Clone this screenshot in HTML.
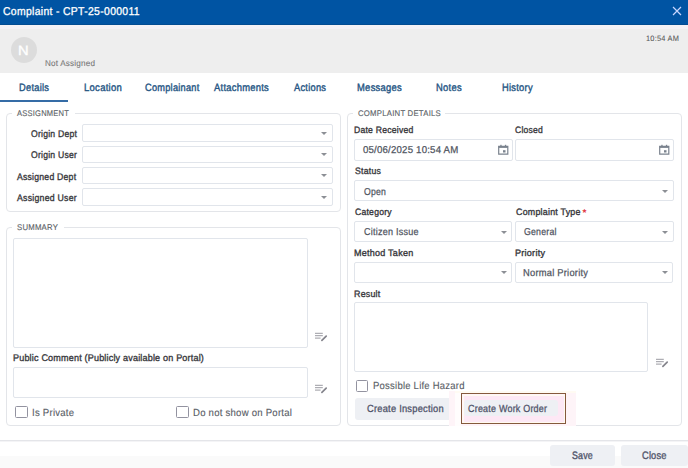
<!DOCTYPE html>
<html><head><meta charset="utf-8">
<style>
*{box-sizing:border-box;margin:0;padding:0}
html,body{width:688px;height:468px;overflow:hidden;background:#fff;font-family:"Liberation Sans",sans-serif;color:#333;text-rendering:geometricPrecision}
.abs{position:absolute}
.t{position:absolute;line-height:1;white-space:nowrap}
.tab{color:#265684}
.leg{color:#5b5f66}
.lbl{color:#38383c}
.val{color:#50555f}
.fs{border:1px solid #e3e5e9;border-radius:4px}
.inp{border:1px solid #e1e5eb;border-radius:2px;background:#fff}
.legbg{background:#fff}
.cb{border:1.5px solid #9393a0;border-radius:1.5px}
.cbl{color:#595d66}
.btn{background:#eef0f4;border-radius:3px}
.btxt{color:#50546a}
</style></head><body>
<div class="abs " style="left:0px;top:0px;width:688px;height:25px;background:#0054a3"></div>
<div class="t " style="top:6.93px;font-size:11.3px;font-weight:normal;letter-spacing:0.35px;-webkit-text-stroke:0.3px currentColor;left:2.90px;transform-origin:0 0;transform:scaleX(0.9216);color:#fff;">Complaint - CPT-25-000011</div>
<svg class="abs" style="left:672px;top:5.5px" width="10" height="10" viewBox="0 0 10 10"><path d="M1 1L9 9M9 1L1 9" stroke="#c8d6ff" stroke-width="1.2"/></svg>
<div class="abs " style="left:0px;top:25px;width:688px;height:47.5px;background:#eeeeee"></div>
<div class="abs " style="left:0px;top:25px;width:688px;height:4px;background:#f3f1f6"></div>
<div class="abs " style="left:0px;top:24px;width:688px;height:1px;background:#024c92"></div>
<div class="abs " style="left:10.5px;top:36.8px;width:26.5px;height:26.5px;border-radius:50%;background:#dcdcdc"></div>
<div class="t " style="top:43.87px;font-size:13.5px;font-weight:normal;letter-spacing:0px;-webkit-text-stroke:0.3px currentColor;left:17.86px;transform-origin:0 0;transform:scaleX(1.0875);color:#fff;">N</div>
<div class="t " style="top:59.19px;font-size:8.4px;font-weight:normal;letter-spacing:0.2px;-webkit-text-stroke:0.1px currentColor;left:44.80px;transform-origin:0 0;transform:scaleX(0.9692);color:#787878;">Not Assigned</div>
<div class="t " style="top:35.10px;font-size:7.8px;font-weight:normal;letter-spacing:0.25px;-webkit-text-stroke:0.05px currentColor;left:645.75px;transform-origin:0 0;transform:scaleX(0.9500);color:#555555;">10:54 AM</div>
<div class="t tab" style="top:83.33px;font-size:10.6px;font-weight:normal;letter-spacing:0.3px;-webkit-text-stroke:0.4px currentColor;left:18.62px;transform-origin:0 0;transform:scaleX(0.8758);">Details</div>
<div class="t tab" style="top:83.33px;font-size:10.6px;font-weight:normal;letter-spacing:0.3px;-webkit-text-stroke:0.4px currentColor;left:83.80px;transform-origin:0 0;transform:scaleX(0.8976);">Location</div>
<div class="t tab" style="top:83.33px;font-size:10.6px;font-weight:normal;letter-spacing:0.3px;-webkit-text-stroke:0.4px currentColor;left:144.70px;transform-origin:0 0;transform:scaleX(0.8683);">Complainant</div>
<div class="t tab" style="top:83.33px;font-size:10.6px;font-weight:normal;letter-spacing:0.3px;-webkit-text-stroke:0.4px currentColor;left:213.90px;transform-origin:0 0;transform:scaleX(0.8855);">Attachments</div>
<div class="t tab" style="top:83.33px;font-size:10.6px;font-weight:normal;letter-spacing:0.3px;-webkit-text-stroke:0.4px currentColor;left:294.40px;transform-origin:0 0;transform:scaleX(0.8757);">Actions</div>
<div class="t tab" style="top:83.33px;font-size:10.6px;font-weight:normal;letter-spacing:0.3px;-webkit-text-stroke:0.4px currentColor;left:357.01px;transform-origin:0 0;transform:scaleX(0.8898);">Messages</div>
<div class="t tab" style="top:83.33px;font-size:10.6px;font-weight:normal;letter-spacing:0.3px;-webkit-text-stroke:0.4px currentColor;left:435.61px;transform-origin:0 0;transform:scaleX(0.8857);">Notes</div>
<div class="t tab" style="top:83.33px;font-size:10.6px;font-weight:normal;letter-spacing:0.3px;-webkit-text-stroke:0.4px currentColor;left:502.12px;transform-origin:0 0;transform:scaleX(0.8794);">History</div>
<div class="abs " style="left:0px;top:100px;width:68px;height:2px;background:#356ca6"></div>
<div class="abs fs" style="left:6px;top:113px;width:335px;height:99px;"></div>
<div class="abs legbg" style="left:12px;top:108px;width:63px;height:10px;"></div>
<div class="t leg" style="top:110.36px;font-size:8.2px;font-weight:normal;letter-spacing:0.25px;-webkit-text-stroke:0.12px currentColor;left:17.40px;transform-origin:0 0;transform:scaleX(0.9193);">ASSIGNMENT</div>
<div class="t lbl" style="top:129.97px;font-size:9.6px;font-weight:normal;letter-spacing:0.25px;-webkit-text-stroke:0.35px currentColor;left:30.50px;transform-origin:0 0;transform:scaleX(0.8980);">Origin Dept</div>
<div class="abs inp" style="left:82px;top:124px;width:251px;height:17.5px;"></div>
<svg class="abs" style="left:320.5px;top:131.8px" width="6" height="3" viewBox="0 0 6 3"><path d="M0 0H6L3 3Z" fill="#8c8f95"/></svg>
<div class="t lbl" style="top:150.87px;font-size:9.6px;font-weight:normal;letter-spacing:0.25px;-webkit-text-stroke:0.35px currentColor;left:30.50px;transform-origin:0 0;transform:scaleX(0.8980);">Origin User</div>
<div class="abs inp" style="left:82px;top:145.5px;width:251px;height:17.5px;"></div>
<svg class="abs" style="left:320.5px;top:153.3px" width="6" height="3" viewBox="0 0 6 3"><path d="M0 0H6L3 3Z" fill="#8c8f95"/></svg>
<div class="t lbl" style="top:172.87px;font-size:9.6px;font-weight:normal;letter-spacing:0.25px;-webkit-text-stroke:0.35px currentColor;left:16.70px;transform-origin:0 0;transform:scaleX(0.9030);">Assigned Dept</div>
<div class="abs inp" style="left:82px;top:166.5px;width:251px;height:17.5px;"></div>
<svg class="abs" style="left:320.5px;top:174.3px" width="6" height="3" viewBox="0 0 6 3"><path d="M0 0H6L3 3Z" fill="#8c8f95"/></svg>
<div class="t lbl" style="top:193.97px;font-size:9.6px;font-weight:normal;letter-spacing:0.25px;-webkit-text-stroke:0.35px currentColor;left:17.00px;transform-origin:0 0;transform:scaleX(0.9123);">Assigned User</div>
<div class="abs inp" style="left:82px;top:188px;width:251px;height:17.5px;"></div>
<svg class="abs" style="left:320.5px;top:195.8px" width="6" height="3" viewBox="0 0 6 3"><path d="M0 0H6L3 3Z" fill="#8c8f95"/></svg>
<div class="abs fs" style="left:6px;top:227px;width:335px;height:199px;"></div>
<div class="abs legbg" style="left:12px;top:221px;width:52px;height:10px;"></div>
<div class="t leg" style="top:224.46px;font-size:8.2px;font-weight:normal;letter-spacing:0.25px;-webkit-text-stroke:0.12px currentColor;left:17.40px;transform-origin:0 0;transform:scaleX(0.9465);">SUMMARY</div>
<div class="abs inp" style="left:13px;top:238px;width:294.5px;height:109.5px;"></div>
<svg class="abs" style="left:315px;top:332px" width="13" height="10" viewBox="0 0 13 10"><path d="M0 1.3H7.8M0 3.7H7.8M0 6.1H5.6" stroke="#9a9aa2" stroke-width="1"/><path d="M6.9 8.4L11.2 4.1" stroke="#84848c" stroke-width="1.7" stroke-linecap="round"/></svg>
<div class="t lbl" style="top:354.17px;font-size:9.6px;font-weight:normal;letter-spacing:0.2px;-webkit-text-stroke:0.35px currentColor;left:12.66px;transform-origin:0 0;transform:scaleX(0.9406);">Public Comment (Publicly available on Portal)</div>
<div class="abs inp" style="left:13px;top:366.8px;width:294.5px;height:31.5px;"></div>
<svg class="abs" style="left:315px;top:384px" width="13" height="10" viewBox="0 0 13 10"><path d="M0 1.3H7.8M0 3.7H7.8M0 6.1H5.6" stroke="#9a9aa2" stroke-width="1"/><path d="M6.9 8.4L11.2 4.1" stroke="#84848c" stroke-width="1.7" stroke-linecap="round"/></svg>
<div class="abs cb" style="left:15.3px;top:406.3px;width:12.3px;height:12px;"></div>
<div class="t cbl" style="top:408.78px;font-size:10.3px;font-weight:normal;letter-spacing:0.25px;-webkit-text-stroke:0.12px currentColor;left:32.07px;transform-origin:0 0;transform:scaleX(0.9318);">Is Private</div>
<div class="abs cb" style="left:176.4px;top:406px;width:12.3px;height:12px;"></div>
<div class="t cbl" style="top:408.78px;font-size:10.3px;font-weight:normal;letter-spacing:0.25px;-webkit-text-stroke:0.12px currentColor;left:193.47px;transform-origin:0 0;transform:scaleX(0.9305);">Do not show on Portal</div>
<div class="abs fs" style="left:347px;top:113px;width:335px;height:312.5px;"></div>
<div class="abs legbg" style="left:353px;top:108px;width:92px;height:10px;"></div>
<div class="t leg" style="top:110.36px;font-size:8.2px;font-weight:normal;letter-spacing:0.25px;-webkit-text-stroke:0.12px currentColor;left:358.40px;transform-origin:0 0;transform:scaleX(0.9471);">COMPLAINT DETAILS</div>
<div class="t lbl" style="top:125.63px;font-size:9.3px;font-weight:normal;letter-spacing:0.25px;-webkit-text-stroke:0.35px currentColor;left:353.87px;transform-origin:0 0;transform:scaleX(0.9270);">Date Received</div>
<div class="t lbl" style="top:125.63px;font-size:9.3px;font-weight:normal;letter-spacing:0.25px;-webkit-text-stroke:0.35px currentColor;left:515.40px;transform-origin:0 0;transform:scaleX(0.9200);">Closed</div>
<div class="abs inp" style="left:354.3px;top:139.2px;width:158.5px;height:21.5px;"></div>
<div class="t val" style="top:146.13px;font-size:10.0px;font-weight:normal;letter-spacing:0.2px;-webkit-text-stroke:0.25px currentColor;left:363.40px;transform-origin:0 0;transform:scaleX(0.9653);">05/06/2025 10:54 AM</div>
<svg class="abs" style="left:498px;top:144.2px" width="11" height="11" viewBox="0 0 11 11"><path d="M0.7 2.4H9.8V10.1H0.7Z" fill="none" stroke="#7b838e" stroke-width="1.2"/><rect x="0.7" y="2" width="9.1" height="1.9" fill="#7b838e"/><rect x="2.3" y="0.8" width="1.3" height="1.6" fill="#7b838e"/><rect x="6.9" y="0.8" width="1.3" height="1.6" fill="#7b838e"/><rect x="5" y="6.2" width="2.5" height="2.3" fill="#7b838e"/></svg>
<div class="abs inp" style="left:515.3px;top:139.2px;width:158.5px;height:21.5px;"></div>
<svg class="abs" style="left:659.2px;top:144.2px" width="11" height="11" viewBox="0 0 11 11"><path d="M0.7 2.4H9.8V10.1H0.7Z" fill="none" stroke="#7b838e" stroke-width="1.2"/><rect x="0.7" y="2" width="9.1" height="1.9" fill="#7b838e"/><rect x="2.3" y="0.8" width="1.3" height="1.6" fill="#7b838e"/><rect x="6.9" y="0.8" width="1.3" height="1.6" fill="#7b838e"/><rect x="5" y="6.2" width="2.5" height="2.3" fill="#7b838e"/></svg>
<div class="t lbl" style="top:166.73px;font-size:9.3px;font-weight:normal;letter-spacing:0.25px;-webkit-text-stroke:0.35px currentColor;left:354.80px;transform-origin:0 0;transform:scaleX(0.9357);">Status</div>
<div class="abs inp" style="left:354.3px;top:179.9px;width:319.7px;height:21.5px;"></div>
<div class="t val" style="top:188.13px;font-size:10.0px;font-weight:normal;letter-spacing:0.25px;-webkit-text-stroke:0.25px currentColor;left:363.50px;transform-origin:0 0;transform:scaleX(0.8680);">Open</div>
<svg class="abs" style="left:661.6px;top:189.6px" width="6" height="3" viewBox="0 0 6 3"><path d="M0 0H6L3 3Z" fill="#8c8f95"/></svg>
<div class="t lbl" style="top:208.43px;font-size:9.3px;font-weight:normal;letter-spacing:0.25px;-webkit-text-stroke:0.35px currentColor;left:354.80px;transform-origin:0 0;transform:scaleX(0.9275);">Category</div>
<div class="t lbl" style="top:208.43px;font-size:9.3px;font-weight:normal;letter-spacing:0.25px;-webkit-text-stroke:0.35px currentColor;left:515.60px;transform-origin:0 0;transform:scaleX(0.9522);">Complaint Type</div>
<div class="t " style="top:209.03px;font-size:10.00px;left:582.6px;transform-origin:0 0;transform:scaleX(1.0000);color:#e0303a;font-weight:bold">*</div>
<div class="abs inp" style="left:354.3px;top:220.7px;width:158px;height:21.5px;"></div>
<div class="t val" style="top:227.73px;font-size:10.0px;font-weight:normal;letter-spacing:0.25px;-webkit-text-stroke:0.25px currentColor;left:363.50px;transform-origin:0 0;transform:scaleX(0.9033);">Citizen Issue</div>
<svg class="abs" style="left:500.5px;top:230.6px" width="6" height="3" viewBox="0 0 6 3"><path d="M0 0H6L3 3Z" fill="#8c8f95"/></svg>
<div class="abs inp" style="left:515.2px;top:220.7px;width:158.5px;height:21.5px;"></div>
<div class="t val" style="top:227.73px;font-size:10.0px;font-weight:normal;letter-spacing:0.25px;-webkit-text-stroke:0.25px currentColor;left:524.40px;transform-origin:0 0;transform:scaleX(0.8757);">General</div>
<svg class="abs" style="left:661.6px;top:230.6px" width="6" height="3" viewBox="0 0 6 3"><path d="M0 0H6L3 3Z" fill="#8c8f95"/></svg>
<div class="t lbl" style="top:249.13px;font-size:9.3px;font-weight:normal;letter-spacing:0.25px;-webkit-text-stroke:0.35px currentColor;left:353.83px;transform-origin:0 0;transform:scaleX(0.9700);">Method Taken</div>
<div class="t lbl" style="top:249.13px;font-size:9.3px;font-weight:normal;letter-spacing:0.25px;-webkit-text-stroke:0.35px currentColor;left:514.62px;transform-origin:0 0;transform:scaleX(0.9767);">Priority</div>
<div class="abs inp" style="left:354.3px;top:261.7px;width:158px;height:21.2px;"></div>
<svg class="abs" style="left:500.5px;top:271px" width="6" height="3" viewBox="0 0 6 3"><path d="M0 0H6L3 3Z" fill="#8c8f95"/></svg>
<div class="abs inp" style="left:515.2px;top:261.7px;width:158.3px;height:21.2px;"></div>
<div class="t val" style="top:268.64px;font-size:10.0px;font-weight:normal;letter-spacing:0.25px;-webkit-text-stroke:0.25px currentColor;left:523.47px;transform-origin:0 0;transform:scaleX(0.9333);">Normal Priority</div>
<svg class="abs" style="left:661.6px;top:271px" width="6" height="3" viewBox="0 0 6 3"><path d="M0 0H6L3 3Z" fill="#8c8f95"/></svg>
<div class="t lbl" style="top:289.63px;font-size:9.3px;font-weight:normal;letter-spacing:0.25px;-webkit-text-stroke:0.35px currentColor;left:353.85px;transform-origin:0 0;transform:scaleX(0.9519);">Result</div>
<div class="abs inp" style="left:354.4px;top:302.4px;width:294px;height:69.8px;"></div>
<svg class="abs" style="left:656px;top:357.5px" width="13" height="10" viewBox="0 0 13 10"><path d="M0 1.3H7.8M0 3.7H7.8M0 6.1H5.6" stroke="#9a9aa2" stroke-width="1"/><path d="M6.9 8.4L11.2 4.1" stroke="#84848c" stroke-width="1.7" stroke-linecap="round"/></svg>
<div class="abs cb" style="left:356.4px;top:380px;width:12px;height:12px;"></div>
<div class="t cbl" style="top:382.28px;font-size:10.3px;font-weight:normal;letter-spacing:0.25px;-webkit-text-stroke:0.12px currentColor;left:372.98px;transform-origin:0 0;transform:scaleX(0.9224);">Possible Life Hazard</div>
<div class="abs btn" style="left:354.5px;top:397.5px;width:97px;height:22.5px;"></div>
<div class="t btxt" style="top:404.68px;font-size:10.3px;font-weight:normal;letter-spacing:0.25px;-webkit-text-stroke:0.3px currentColor;left:366.70px;transform-origin:0 0;transform:scaleX(0.9048);">Create Inspection</div>
<div class="abs " style="left:449px;top:390.5px;width:127px;height:35.5px;background:#fef4f8"></div>
<div class="abs " style="left:455px;top:390.5px;width:6px;height:35.5px;background:#fffdfd"></div>
<div class="abs " style="left:455px;top:390.5px;width:121px;height:2.5px;background:#fffbf3"></div>
<div class="abs " style="left:462.5px;top:395px;width:102px;height:27.5px;background:#fde8f5;border:1px solid #fffaf0"></div>
<div class="abs btn" style="left:463.5px;top:399.8px;width:94.5px;height:16px;"></div>
<div class="abs " style="left:460.8px;top:392.8px;width:105.4px;height:31.4px;border:1.8px solid #85593c"></div>
<div class="t btxt" style="top:404.98px;font-size:10.3px;font-weight:normal;letter-spacing:0.25px;-webkit-text-stroke:0.3px currentColor;left:468.10px;transform-origin:0 0;transform:scaleX(0.8703);">Create Work Order</div>
<div class="abs " style="left:0px;top:456px;width:688px;height:12px;background:#fafafa"></div>
<div class="abs " style="left:0px;top:440px;width:688px;height:1px;background:#e4e5e9"></div>
<div class="abs " style="left:0px;top:441px;width:688px;height:1px;background:#f4f4f6"></div>
<div class="abs btn" style="left:549.7px;top:445.4px;width:65.3px;height:20.5px;"></div>
<div class="t btxt" style="top:451.36px;font-size:10.8px;font-weight:normal;letter-spacing:0.2px;-webkit-text-stroke:0.35px currentColor;left:571.80px;transform-origin:0 0;transform:scaleX(0.8200);">Save</div>
<div class="abs btn" style="left:621.3px;top:445.4px;width:66.7px;height:20.5px;"></div>
<div class="t btxt" style="top:451.36px;font-size:10.8px;font-weight:normal;letter-spacing:0.2px;-webkit-text-stroke:0.35px currentColor;left:642.20px;transform-origin:0 0;transform:scaleX(0.8607);">Close</div>
</body></html>
